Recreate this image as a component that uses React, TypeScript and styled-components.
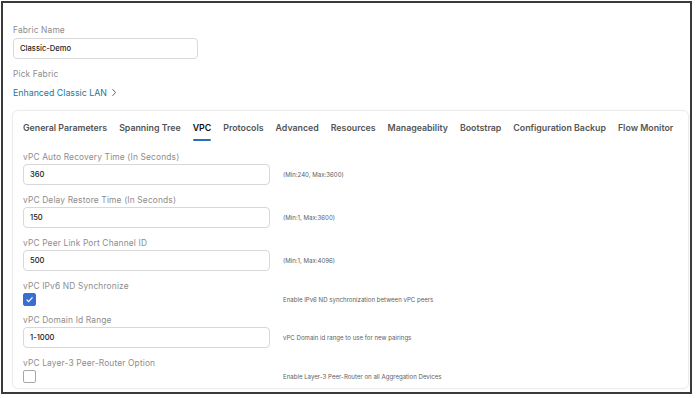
import { createGlobalStyle } from "styled-components";
import styled from "styled-components";

const GlobalStyle = createGlobalStyle`
  html, body {
    margin: 0;
    padding: 0;
    background: #ffffff;
  }
  body {
    font-family: Inter, "Noto Sans", sans-serif;
  }
`;

const Frame = styled.div`
  box-sizing: border-box;
  margin: 1px 0 0 1px;
  width: 691px;
  height: 393px;
  border: 2px solid #3a3a3a;
  padding: 22px 0 0 10px;
  overflow: hidden;
`;

const Label = styled.div`
  font-size: 8.4px;
  color: #8d8d8d;
  line-height: 11px;
  letter-spacing: 0.15px;
  white-space: nowrap;
`;

const TextInput = styled.div<{ $w: number }>`
  box-sizing: border-box;
  width: ${(p) => p.$w}px;
  height: 21px;
  border: 1px solid #d8d8d8;
  border-radius: 4px;
  padding: 0 6px;
  display: flex;
  align-items: center;
  font-size: 7.6px;
  font-weight: 500;
  color: #222;
`;

const Group = styled.div<{ $mt?: number }>`
  display: flex;
  flex-direction: column;
  gap: 1.5px;
  margin-top: ${(p) => p.$mt ?? 0}px;
`;

const Link = styled.div`
  display: flex;
  align-items: center;
  gap: 4px;
  font-size: 8.8px;
  color: #1f7795;
  margin-top: 7px;
  line-height: 11px;
`;

const Card = styled.div`
  box-sizing: border-box;
  margin: 12px 0 0 -1px;
  width: 677px;
  height: 279px;
  border: 1px solid #ececec;
  border-radius: 6px;
  box-shadow: 0 0 2px rgba(0, 0, 0, 0.06);
  padding: 0 0 0 10px;
`;

const Tabs = styled.div`
  display: flex;
  gap: 12px;
  height: 30px;
  align-items: stretch;
`;

const Tab = styled.div<{ $active?: boolean }>`
  position: relative;
  display: flex;
  align-items: center;
  padding-top: 2px;
  font-size: 8.8px;
  font-weight: 600;
  color: ${(p) => (p.$active ? "#111" : "#555")};
  white-space: nowrap;
  &::after {
    content: "";
    display: ${(p) => (p.$active ? "block" : "none")};
    position: absolute;
    left: 0;
    right: 0;
    bottom: 0;
    height: 2px;
    border-radius: 1px;
    background: #2c6cc0;
  }
`;

const Fields = styled.div`
  display: flex;
  flex-direction: column;
  padding-top: 10.5px;
`;

const FieldRow = styled.div<{ $check?: boolean }>`
  display: flex;
  align-items: flex-end;
  gap: 13px;
  margin-bottom: ${(p) => (p.$check ? 9 : 10)}px;
`;

const FieldMain = styled.div`
  display: flex;
  flex-direction: column;
  gap: 1px;
  width: 247px;
`;

const Hint = styled.div<{ $h: number }>`
  font-size: 6.1px;
  color: #5e5e5e;
  height: ${(p) => p.$h}px;
  display: flex;
  align-items: center;
  white-space: nowrap;
`;

const Box = styled.div<{ $checked?: boolean }>`
  box-sizing: border-box;
  width: 13px;
  height: 13px;
  border-radius: 2px;
  border: 1px solid ${(p) => (p.$checked ? "#3a6fd2" : "#a8a8a8")};
  background: ${(p) => (p.$checked ? "#3a6fd2" : "#fff")};
  display: flex;
  align-items: center;
  justify-content: center;
`;

type Field =
  | { kind: "input"; label: string; value: string; hint: string }
  | { kind: "check"; label: string; checked: boolean; hint: string };

const fields: Field[] = [
  { kind: "input", label: "vPC Auto Recovery Time (In Seconds)", value: "360", hint: "(Min:240, Max:3600)" },
  { kind: "input", label: "vPC Delay Restore Time (In Seconds)", value: "150", hint: "(Min:1, Max:3600)" },
  { kind: "input", label: "vPC Peer Link Port Channel ID", value: "500", hint: "(Min:1, Max:4096)" },
  { kind: "check", label: "vPC IPv6 ND Synchronize", checked: true, hint: "Enable IPv6 ND synchronization between vPC peers" },
  { kind: "input", label: "vPC Domain Id Range", value: "1-1000", hint: "vPC Domain id range to use for new pairings" },
  { kind: "check", label: "vPC Layer-3 Peer-Router Option", checked: false, hint: "Enable Layer-3 Peer-Router on all Aggregation Devices" },
];

const tabs = [
  "General Parameters",
  "Spanning Tree",
  "VPC",
  "Protocols",
  "Advanced",
  "Resources",
  "Manageability",
  "Bootstrap",
  "Configuration Backup",
  "Flow Monitor",
];

export default function App() {
  return (
    <>
      <GlobalStyle />
      <Frame>
        <Group>
          <Label>Fabric Name</Label>
          <TextInput $w={185}>Classic-Demo</TextInput>
        </Group>
        <Group $mt={10.5}>
          <Label>Pick Fabric</Label>
        </Group>
        <Link>
          Enhanced Classic LAN
          <svg width="6" height="9" viewBox="0 0 6 9">
            <path d="M1.5 1.2l3 3.3-3 3.3" fill="none" stroke="#1f7795" strokeWidth="1" />
          </svg>
        </Link>
        <Card>
          <Tabs>
            {tabs.map((t) => (
              <Tab key={t} $active={t === "VPC"}>
                {t}
              </Tab>
            ))}
          </Tabs>
          <Fields>
            {fields.map((f) => (
              <FieldRow key={f.label} $check={f.kind === "check"}>
                <FieldMain>
                  <Label>{f.label}</Label>
                  {f.kind === "input" ? (
                    <TextInput $w={247}>{f.value}</TextInput>
                  ) : (
                    <Box $checked={f.checked}>
                      {f.checked && (
                        <svg width="9" height="9" viewBox="0 0 9 9">
                          <path d="M1.6 4.7l2 2 3.9-4.4" fill="none" stroke="#fff" strokeWidth="1.2" />
                        </svg>
                      )}
                    </Box>
                  )}
                </FieldMain>
                <Hint $h={f.kind === "input" ? 21 : 13}>{f.hint}</Hint>
              </FieldRow>
            ))}
          </Fields>
        </Card>
      </Frame>
    </>
  );
}
